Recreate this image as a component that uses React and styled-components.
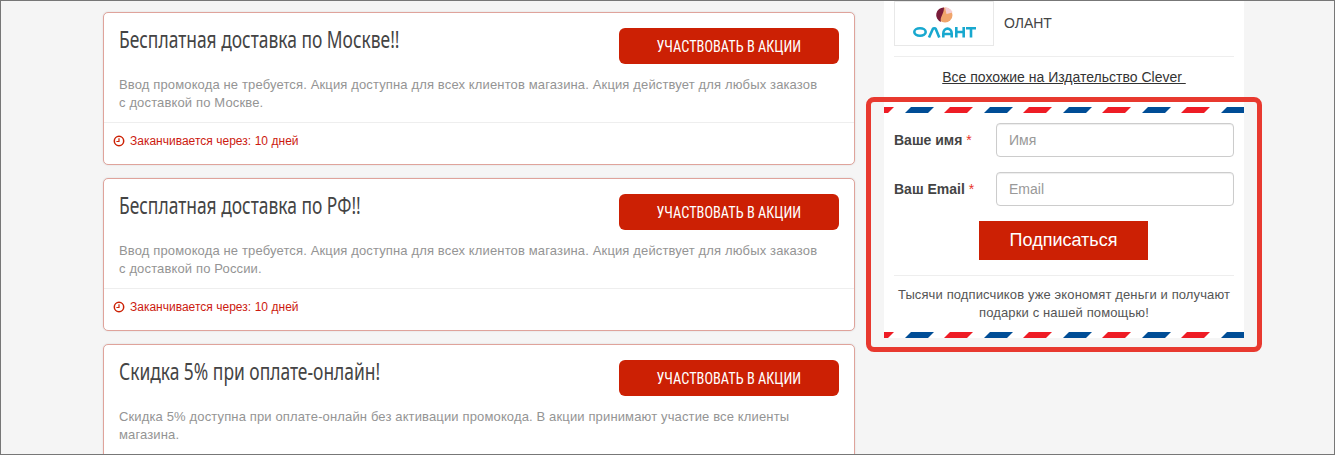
import styled, {createGlobalStyle} from "styled-components";

const GlobalStyle = createGlobalStyle`
  html, body {
    margin: 0;
    height: 455px;
    overflow: hidden;
    background: #f5f5f5;
  }

  * {
    box-sizing: border-box;
  }
`

const Page = styled.div`
  height: 455px;
  overflow: hidden;
  border: 1px solid #777;
  padding-left: 102px;
  display: flex;
  align-items: flex-start;
  gap: 11px;
  font-family: "Liberation Sans", Arial, sans-serif;
`

const Offers = styled.div`
  width: 752px;
  padding-top: 11px;
  display: flex;
  flex-direction: column;
  gap: 13px;
`

const Card = styled.div`
  height: 153px;
  flex-shrink: 0;
  background: #fff;
  border: 1px solid #dfa39b;
  border-radius: 5px;
  box-shadow: 0 0 2px rgba(0, 0, 0, .12);
`

const CardBody = styled.div`
  height: 110px;
  padding: 15px 15px 0;
  border-bottom: 1px solid #eee;
`

const CardHead = styled.div`
  display: flex;
  justify-content: space-between;
  align-items: flex-start;
`

const CardTitle = styled.div`
  font-family: "Noto Sans", sans-serif;
  font-size: 23px;
  line-height: 22px;
  color: #444;
  transform: scaleX(.757);
  transform-origin: left center;
  white-space: nowrap;
`

const JoinButton = styled.div`
  width: 220px;
  height: 36px;
  background: #cc2004;
  border-radius: 6px;
  color: #fff;
  font-family: "Liberation Sans Narrow", "Roboto Condensed", Roboto, sans-serif;
  font-size: 16px;
  line-height: 37px;
  text-align: center;

  span {
    display: inline-block;
    transform: scaleX(.895);
  }
`

const CardText = styled.div`
  margin-top: 12px;
  width: 702px;
  font-size: 13px;
  line-height: 18px;
  letter-spacing: .14px;
  color: #949494;
`

const CardFooter = styled.div`
  display: flex;
  align-items: center;
  gap: 5px;
  height: 36px;
  padding: 0 0 0 9px;
  font-size: 12px;
  color: #cc1a10;
  word-spacing: .2px;
`

const ClockIcon = styled.svg`
  width: 12px;
  height: 12px;
  color: #cc2004;
`

const Sidebar = styled.div`
  width: 396px;
  display: flex;
  flex-direction: column;
`

const SimilarBlock = styled.div`
  height: 96px;
  margin: 0 18px;
  padding: 0 10px;
  background: #fff;
`

const ShopRow = styled.div`
  display: flex;
  align-items: flex-start;
  gap: 10px;
  height: 56px;
  border-bottom: 1px solid #eee;
  font-size: 14px;
  line-height: 44px;
  color: #444;
`

const LogoBox = styled.div`
  width: 100px;
  height: 45px;
  border: 1px solid #e8e8e8;
`

const SimilarLink = styled.div`
  margin-top: 12px;
  font-size: 14px;
  line-height: 16px;
  text-align: center;
  color: #333;
  text-decoration: underline;
  white-space: pre;
`

const Highlight = styled.div`
  height: 255px;
  padding: 0 13px;
  border: 5px solid #e8392f;
  border-radius: 8px;
`

const Subscribe = styled.div`
  background: #fff;
  height: 236px;
  padding-top: 5px;
  display: flex;
  flex-direction: column;
`

const Stripes = styled.svg`
  display: block;
  width: 360px;
  height: 6px;
  flex-shrink: 0;
`

const FormArea = styled.div`
  flex: 1;
  padding: 10px 10px 0;
`

const Field = styled.div`
  display: flex;
  align-items: center;
  height: 34px;
  margin-bottom: 15px;
`

const FieldLabel = styled.div`
  width: 102px;
  font-size: 14px;
  font-weight: bold;
  color: #444;

  span {
    color: #e8332a;
    font-weight: normal;
  }
`

const FieldInput = styled.input`
  width: 238px;
  height: 34px;
  padding: 0 12px;
  border: 1px solid #ccc;
  border-radius: 4px;
  background: #fff;
  font-family: "Liberation Sans", Arial, sans-serif;
  font-size: 14px;
  color: #444;
  box-shadow: inset 0 1px 1px rgba(0, 0, 0, .075);

  &::placeholder {
    color: #999;
    opacity: 1;
  }
`

const SubmitRow = styled.div`
  display: flex;
  justify-content: center;
  padding: 0 1px 15px 0;
  border-bottom: 1px solid #eee;
`

const SubmitButton = styled.div`
  width: 169px;
  height: 39px;
  background: #cc2004;
  color: #fff;
  font-size: 18px;
  line-height: 38px;
  text-align: center;
`

const Note = styled.div`
  margin-top: 10px;
  font-size: 13px;
  line-height: 18px;
  letter-spacing: .12px;
  text-align: center;
  color: #555;
`

const offers = [
    {
        title: 'Бесплатная доставка по Москве!!',
        text: 'Ввод промокода не требуется. Акция доступна для всех клиентов магазина. Акция действует для любых заказов с доставкой по Москве.',
    },
    {
        title: 'Бесплатная доставка по РФ!!',
        text: 'Ввод промокода не требуется. Акция доступна для всех клиентов магазина. Акция действует для любых заказов с доставкой по России.',
    },
    {
        title: 'Скидка 5% при оплате-онлайн!',
        text: 'Скидка 5% доступна при оплате-онлайн без активации промокода. В акции принимают участие все клиенты магазина.',
    },
];

// airmail edge, the same pattern top and bottom
const AirmailEdge = ({id}) => (
    <Stripes viewBox="0 0 360 6">
        <defs>
            <pattern id={id} width="79" height="6" patternUnits="userSpaceOnUse">
                <polygon points="21,6 27,0 50,0 44,6" fill="#004d96"/>
                <polygon points="60,6 66,0 89,0 83,6" fill="#ee1c25"/>
                <polygon points="-19,6 -13,0 10,0 4,6" fill="#ee1c25"/>
            </pattern>
        </defs>
        <rect width="360" height="6" fill={`url(#${id})`}/>
    </Stripes>
);

const Clock = () => (
    <ClockIcon viewBox="0 0 12 12">
        <circle cx="6" cy="6" r="4.7" fill="none" stroke="currentColor" strokeWidth="1.5"/>
        <path d="M6 3.200v3.300H3.400" fill="none" stroke="currentColor" strokeWidth="1.200"/>
    </ClockIcon>
);

const OlantLogo = () => (
    <svg width="98" height="43" viewBox="0 0 98 43">
        <circle cx="50" cy="13" r="7.500" fill="#f0a56c"/>
        <path d="M49 5.500a7.500 7.500 0 0 0 -3 14.500c-1.500-5 3-7.500 3-14.500z" fill="#7a1c3a"/>
        <path d="M50 5.500c3 0 6.500 1.500 7.500 5l-6 1.500z" fill="#f5cdd3"/>
        <g fill="none" stroke="#18a8cf" strokeWidth="2.600">
            <ellipse cx="25" cy="30" rx="5.700" ry="3.700"/>
            <path d="M34 35.500l3.800-8.500c.6-1 2.400-1 3 0l3.500 8.500"/>
            <path d="M48.300 35.500v-4c0-6.500 8.400-6.500 8.400 0v4M48.300 32h8.400"/>
            <path d="M61.300 25v10.500M68.700 25v10.500M61.300 30h7.400"/>
            <path d="M71 26.300h10M76 26.300v9.200"/>
        </g>
    </svg>
);

export default function App() {
    return <>
        <GlobalStyle/>
        <Page>
            <Offers>
                {offers.map((offer) => (
                    <Card key={offer.title}>
                        <CardBody>
                            <CardHead>
                                <CardTitle>{offer.title}</CardTitle>
                                <JoinButton><span>УЧАСТВОВАТЬ В АКЦИИ</span></JoinButton>
                            </CardHead>
                            <CardText>{offer.text}</CardText>
                        </CardBody>
                        <CardFooter>
                            <Clock/>
                            Заканчивается через: 10 дней
                        </CardFooter>
                    </Card>
                ))}
            </Offers>
            <Sidebar>
                <SimilarBlock>
                    <ShopRow>
                        <LogoBox><OlantLogo/></LogoBox>
                        ОЛАНТ
                    </ShopRow>
                    <SimilarLink>Все похожие на Издательство Clever </SimilarLink>
                </SimilarBlock>
                <Highlight>
                    <Subscribe>
                        <AirmailEdge id="edge-top"/>
                        <FormArea>
                            <Field>
                                <FieldLabel>Ваше имя <span>*</span></FieldLabel>
                                <FieldInput placeholder="Имя"/>
                            </Field>
                            <Field>
                                <FieldLabel>Ваш Email <span>*</span></FieldLabel>
                                <FieldInput placeholder="Email"/>
                            </Field>
                            <SubmitRow>
                                <SubmitButton>Подписаться</SubmitButton>
                            </SubmitRow>
                            <Note>Тысячи подписчиков уже экономят деньги и получают подарки с нашей помощью!</Note>
                        </FormArea>
                        <AirmailEdge id="edge-bottom"/>
                    </Subscribe>
                </Highlight>
            </Sidebar>
        </Page>
    </>
}
